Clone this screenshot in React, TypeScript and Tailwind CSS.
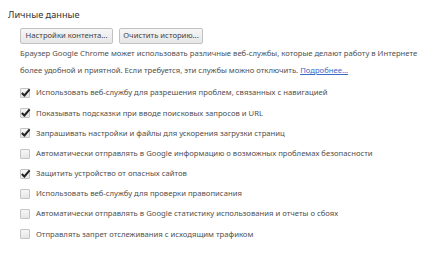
import React from 'react';

const rows: { label: string; checked: boolean }[] = [
  { label: 'Использовать веб-службу для разрешения проблем, связанных с навигацией', checked: true },
  { label: 'Показывать подсказки при вводе поисковых запросов и URL', checked: true },
  { label: 'Запрашивать настройки и файлы для ускорения загрузки страниц', checked: true },
  { label: 'Автоматически отправлять в Google информацию о возможных проблемах безопасности', checked: false },
  { label: 'Защитить устройство от опасных сайтов', checked: true },
  { label: 'Использовать веб-службу для проверки правописания', checked: false },
  { label: 'Автоматически отправлять в Google статистику использования и отчеты о сбоях', checked: false },
  { label: 'Отправлять запрет отслеживания с исходящим трафиком', checked: false },
];

function Box({ checked }: { checked: boolean }) {
  return (
    <span className="relative w-[10px] h-[10px] shrink-0 border border-[#c4c4c4] rounded-[1px] bg-gradient-to-b from-[#f6f6f6] to-[#e6e6e6]">
      {checked && (
        <svg viewBox="0 0 12 12" className="absolute left-[-1px] top-[-2px] w-[11px] h-[11px]">
          <path d="M2 6.5 L4.8 9.2 L10.5 2.5" fill="none" stroke="#222" strokeWidth="2.2" />
        </svg>
      )}
    </span>
  );
}

export default function App() {
  return (
    <div className="w-[434px] h-[253px] bg-white overflow-hidden pl-2 pt-[9px] font-['Noto_Sans',sans-serif] text-[7.7px] text-[#4f4f4f]">
      <div className="text-[9.2px] text-[#333] leading-[12px]">Личные данные</div>

      <div className="pl-3 mt-[7px] flex gap-[6px]">
        <button className="h-[16px] w-[93px] border border-[#c2c2c2] rounded-[2px] bg-gradient-to-b from-[#f6f6f6] to-[#e6e6e6] text-[7.7px] text-[#444] leading-none whitespace-nowrap">
          Настройки контента...
        </button>
        <button className="h-[16px] w-[84px] border border-[#c2c2c2] rounded-[2px] bg-gradient-to-b from-[#f6f6f6] to-[#e6e6e6] text-[7.7px] text-[#444] leading-none whitespace-nowrap">
          Очистить историю...
        </button>
      </div>

      <p className="pl-3 mt-[1px] leading-[17px] whitespace-nowrap">
        Браузер Google Chrome может использовать различные веб-службы, которые делают работу в Интернете
        <br />
        более удобной и приятной. Если требуется, эти службы можно отключить.{' '}
        <a className="text-[#3a6cc6] underline">Подробнее...</a>
      </p>

      <div className="pl-3 mt-[4px] flex flex-col">
        {rows.map((r, i) => (
          <label key={i} className="h-[20.2px] flex items-center gap-[6px]">
            <Box checked={r.checked} />
            <span className="whitespace-nowrap">{r.label}</span>
          </label>
        ))}
      </div>
    </div>
  );
}
